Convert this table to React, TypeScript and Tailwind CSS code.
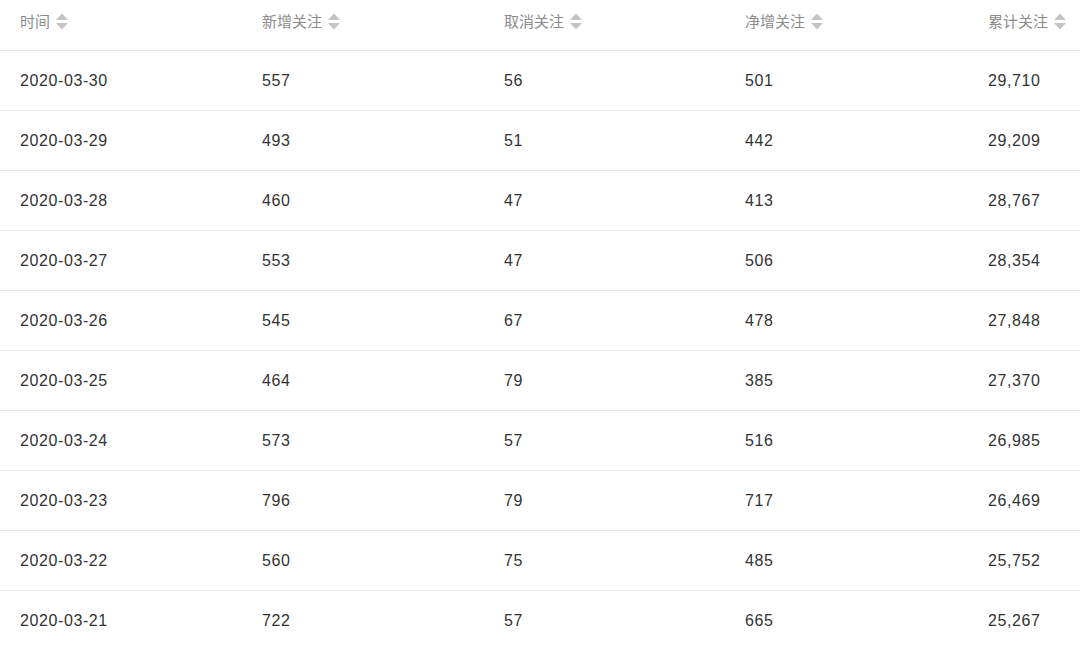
const columns = ['时间', '新增关注', '取消关注', '净增关注', '累计关注'];

const rows = [
  ['2020-03-30', '557', '56', '501', '29,710'],
  ['2020-03-29', '493', '51', '442', '29,209'],
  ['2020-03-28', '460', '47', '413', '28,767'],
  ['2020-03-27', '553', '47', '506', '28,354'],
  ['2020-03-26', '545', '67', '478', '27,848'],
  ['2020-03-25', '464', '79', '385', '27,370'],
  ['2020-03-24', '573', '57', '516', '26,985'],
  ['2020-03-23', '796', '79', '717', '26,469'],
  ['2020-03-22', '560', '75', '485', '25,752'],
  ['2020-03-21', '722', '57', '665', '25,267'],
];

const SortIcon = () => (
  <svg width="12" height="17" viewBox="0 0 12 17" className="ml-[6px] shrink-0">
    <path d="M6 0.5 L12 7 H0 Z" fill="#c4c4c4" />
    <path d="M6 16.5 L12 10 H0 Z" fill="#c4c4c4" />
  </svg>
);

const App = () => {
  return (
    <div className="w-[1080px] h-[646px] overflow-hidden bg-white font-['Liberation_Sans','Noto_Sans_CJK_SC',sans-serif]">
      <div className="grid grid-cols-[262px_242px_241px_243px_92px] h-[51px] border-b border-[#e8e8e8]">
        {columns.map((c, i) => (
          <div key={c} className={`flex items-start pt-[13px] text-[15px] leading-[17px] text-[#8c8c8c] whitespace-nowrap ${i === 0 ? 'pl-5' : ''}`}>
            {c}
            <SortIcon />
          </div>
        ))}
      </div>
      {rows.map((r) => (
        <div key={r[0]} className="grid grid-cols-[262px_242px_241px_243px_92px] h-[60px] border-b border-[#e8e8e8]">
          {r.map((v, i) => (
            <div key={i} className={`flex items-center text-[16px] tracking-[0.6px] text-[#333333] ${i === 0 ? 'pl-5' : ''}`}>
              {v}
            </div>
          ))}
        </div>
      ))}
    </div>
  );
};

export default App;
